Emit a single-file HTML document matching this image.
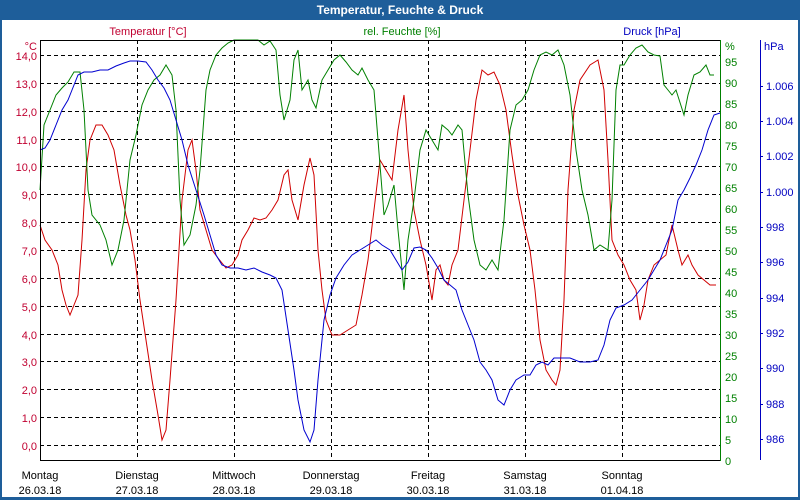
<!DOCTYPE html>
<html><head><meta charset="utf-8"><style>
html,body{margin:0;padding:0;width:800px;height:500px;overflow:hidden;background:#fff}
svg text{font-family:"Liberation Sans",sans-serif;font-size:11px}
</style></head><body>
<svg width="800" height="500" xmlns="http://www.w3.org/2000/svg">
<rect x="0" y="0" width="800" height="500" fill="#1e5e9a"/>
<rect x="2" y="20" width="796" height="477" fill="#fff"/>
<text x="400" y="14" fill="#fff" font-weight="bold" text-anchor="middle" style="font-size:12px">Temperatur, Feuchte &amp; Druck</text>
<g stroke="#000" stroke-dasharray="4,3" stroke-width="1">
<line x1="40" y1="55.5" x2="720" y2="55.5"/><line x1="40" y1="83.5" x2="720" y2="83.5"/><line x1="40" y1="111.5" x2="720" y2="111.5"/><line x1="40" y1="139.5" x2="720" y2="139.5"/><line x1="40" y1="166.5" x2="720" y2="166.5"/><line x1="40" y1="194.5" x2="720" y2="194.5"/><line x1="40" y1="222.5" x2="720" y2="222.5"/><line x1="40" y1="250.5" x2="720" y2="250.5"/><line x1="40" y1="278.5" x2="720" y2="278.5"/><line x1="40" y1="306.5" x2="720" y2="306.5"/><line x1="40" y1="334.5" x2="720" y2="334.5"/><line x1="40" y1="361.5" x2="720" y2="361.5"/><line x1="40" y1="389.5" x2="720" y2="389.5"/><line x1="40" y1="417.5" x2="720" y2="417.5"/><line x1="40" y1="445.5" x2="720" y2="445.5"/>
<line x1="137.5" y1="40" x2="137.5" y2="460"/><line x1="234.5" y1="40" x2="234.5" y2="460"/><line x1="331.5" y1="40" x2="331.5" y2="460"/><line x1="428.5" y1="40" x2="428.5" y2="460"/><line x1="525.5" y1="40" x2="525.5" y2="460"/><line x1="622.5" y1="40" x2="622.5" y2="460"/>
</g>
<polyline fill="none" stroke="#d00000" points="40,225 45,240 52,250 58,265 62,290 66,305 70,315 74,305 78,295 82,240 86,170 90,140 96,125 102,125 108,135 114,150 120,185 126,215 130,230 135,260 140,300 146,340 152,380 158,415 162,440 166,430 170,380 176,300 182,200 188,150 192,140 196,170 200,210 206,230 212,250 218,258 226,268 232,265 238,255 242,240 248,230 254,218 260,220 266,218 272,210 278,200 284,175 288,170 292,200 298,220 304,185 310,158 314,175 318,250 322,290 326,320 332,335 340,335 348,330 356,325 362,295 368,260 374,210 380,160 386,170 392,180 398,130 404,95 408,150 414,210 420,240 426,265 432,300 436,270 440,265 444,280 448,285 452,265 458,250 464,200 470,150 476,100 482,70 488,75 494,72 500,85 506,110 512,155 518,195 524,225 530,250 535,290 540,340 546,370 552,380 556,385 560,370 564,300 568,190 574,110 580,80 590,65 598,60 604,90 608,160 612,240 618,255 624,265 630,280 636,290 640,320 644,305 648,280 654,265 660,260 666,255 672,225 678,250 682,265 688,255 692,265 698,275 704,280 710,285 716,285"/>
<polyline fill="none" stroke="#008000" points="40,190 44,125 50,110 56,95 62,88 68,82 74,72 80,72 84,110 88,190 92,215 100,225 106,240 112,265 118,250 124,220 130,160 136,135 142,105 148,90 154,80 160,75 166,65 172,75 176,110 180,200 184,245 190,235 196,205 200,170 206,90 210,70 216,55 222,48 228,43 234,40 246,40 258,40 264,45 270,41 276,50 280,95 284,120 290,100 294,60 298,50 302,90 308,80 312,100 316,108 322,80 328,70 334,60 340,55 346,62 352,70 358,75 362,68 368,80 374,90 380,165 384,215 388,205 394,185 398,230 404,290 408,240 414,200 420,150 426,130 432,140 438,150 442,125 448,130 452,135 458,125 462,130 468,195 474,240 480,265 486,270 492,260 498,270 504,220 510,130 516,105 522,100 528,90 534,70 540,55 546,52 552,55 558,50 564,65 570,95 576,150 582,190 588,215 594,250 600,245 608,250 612,200 616,90 620,65 624,65 630,55 636,48 642,45 648,52 654,55 660,56 664,85 668,90 672,95 676,90 684,115 688,95 694,75 700,72 706,65 710,75 714,75"/>
<polyline fill="none" stroke="#0000d0" points="40,150 45,148 50,140 56,125 62,110 68,100 72,90 78,75 84,72 92,72 100,70 108,70 116,66 124,63 130,61 138,61 146,62 152,70 158,80 164,88 170,100 176,120 182,140 188,165 196,190 204,215 210,235 216,255 222,265 230,268 238,268 246,270 254,268 262,272 270,275 276,278 282,290 288,330 294,370 298,400 304,430 310,442 314,430 318,380 324,320 330,295 336,278 344,265 352,255 360,250 368,245 376,240 382,245 390,250 396,260 402,270 408,262 414,248 420,247 426,250 432,258 438,268 444,280 450,285 456,290 462,310 468,325 474,340 480,362 486,370 492,380 498,400 504,405 510,390 516,380 524,375 530,375 536,365 542,362 548,365 554,358 562,358 570,358 580,362 590,362 598,360 604,345 610,320 616,308 624,305 632,300 640,290 648,280 654,270 660,260 666,245 672,230 678,200 684,190 690,178 696,165 702,150 708,130 714,115 720,113"/>
<line x1="40.5" y1="40" x2="40.5" y2="461" stroke="#000"/>
<line x1="40" y1="40.5" x2="720" y2="40.5" stroke="#000"/>
<line x1="40" y1="460.5" x2="720" y2="460.5" stroke="#000"/>
<line x1="720.5" y1="40" x2="720.5" y2="461" stroke="#008000"/>
<line x1="760.5" y1="40" x2="760.5" y2="460" stroke="#0000c0"/>
<g fill="#c00030" text-anchor="end">
<text x="37" y="50">°C</text>
<text x="37" y="60">14,0</text><text x="37" y="88">13,0</text><text x="37" y="116">12,0</text><text x="37" y="144">11,0</text><text x="37" y="171">10,0</text><text x="37" y="199">9,0</text><text x="37" y="227">8,0</text><text x="37" y="255">7,0</text><text x="37" y="283">6,0</text><text x="37" y="311">5,0</text><text x="37" y="339">4,0</text><text x="37" y="366">3,0</text><text x="37" y="394">2,0</text><text x="37" y="422">1,0</text><text x="37" y="450">0,0</text>
</g>
<text x="148" y="35" fill="#c00030" text-anchor="middle">Temperatur [°C]</text>
<text x="402" y="35" fill="#008000" text-anchor="middle">rel. Feuchte [%]</text>
<text x="652" y="35" fill="#0000c0" text-anchor="middle">Druck [hPa]</text>
<g fill="#008000">
<text x="725" y="50">%</text>
<text x="725" y="66">95</text><text x="725" y="87">90</text><text x="725" y="108">85</text><text x="725" y="129">80</text><text x="725" y="150">75</text><text x="725" y="171">70</text><text x="725" y="192">65</text><text x="725" y="213">60</text><text x="725" y="234">55</text><text x="725" y="255">50</text><text x="725" y="276">45</text><text x="725" y="297">40</text><text x="725" y="318">35</text><text x="725" y="339">30</text><text x="725" y="360">25</text><text x="725" y="381">20</text><text x="725" y="402">15</text><text x="725" y="423">10</text><text x="725" y="444">5</text><text x="725" y="465">0</text>
</g>
<g fill="#0000c0">
<text x="764" y="50">hPa</text>
<text x="766" y="90">1.006</text><text x="766" y="125">1.004</text><text x="766" y="160">1.002</text><text x="766" y="196">1.000</text><text x="766" y="231">998</text><text x="766" y="266">996</text><text x="766" y="302">994</text><text x="766" y="337">992</text><text x="766" y="372">990</text><text x="766" y="408">988</text><text x="766" y="443">986</text>
</g>
<g stroke="#0000c0"><line x1="761" y1="86.5" x2="763" y2="86.5"/><line x1="761" y1="121.5" x2="763" y2="121.5"/><line x1="761" y1="156.5" x2="763" y2="156.5"/><line x1="761" y1="192.5" x2="763" y2="192.5"/><line x1="761" y1="227.5" x2="763" y2="227.5"/><line x1="761" y1="262.5" x2="763" y2="262.5"/><line x1="761" y1="298.5" x2="763" y2="298.5"/><line x1="761" y1="333.5" x2="763" y2="333.5"/><line x1="761" y1="368.5" x2="763" y2="368.5"/><line x1="761" y1="404.5" x2="763" y2="404.5"/><line x1="761" y1="439.5" x2="763" y2="439.5"/></g>
<g fill="#000" text-anchor="middle">
<text x="40" y="479">Montag</text><text x="40" y="494">26.03.18</text>
<text x="137" y="479">Dienstag</text><text x="137" y="494">27.03.18</text>
<text x="234" y="479">Mittwoch</text><text x="234" y="494">28.03.18</text>
<text x="331" y="479">Donnerstag</text><text x="331" y="494">29.03.18</text>
<text x="428" y="479">Freitag</text><text x="428" y="494">30.03.18</text>
<text x="525" y="479">Samstag</text><text x="525" y="494">31.03.18</text>
<text x="622" y="479">Sonntag</text><text x="622" y="494">01.04.18</text>
</g>
</svg>
</body></html>
